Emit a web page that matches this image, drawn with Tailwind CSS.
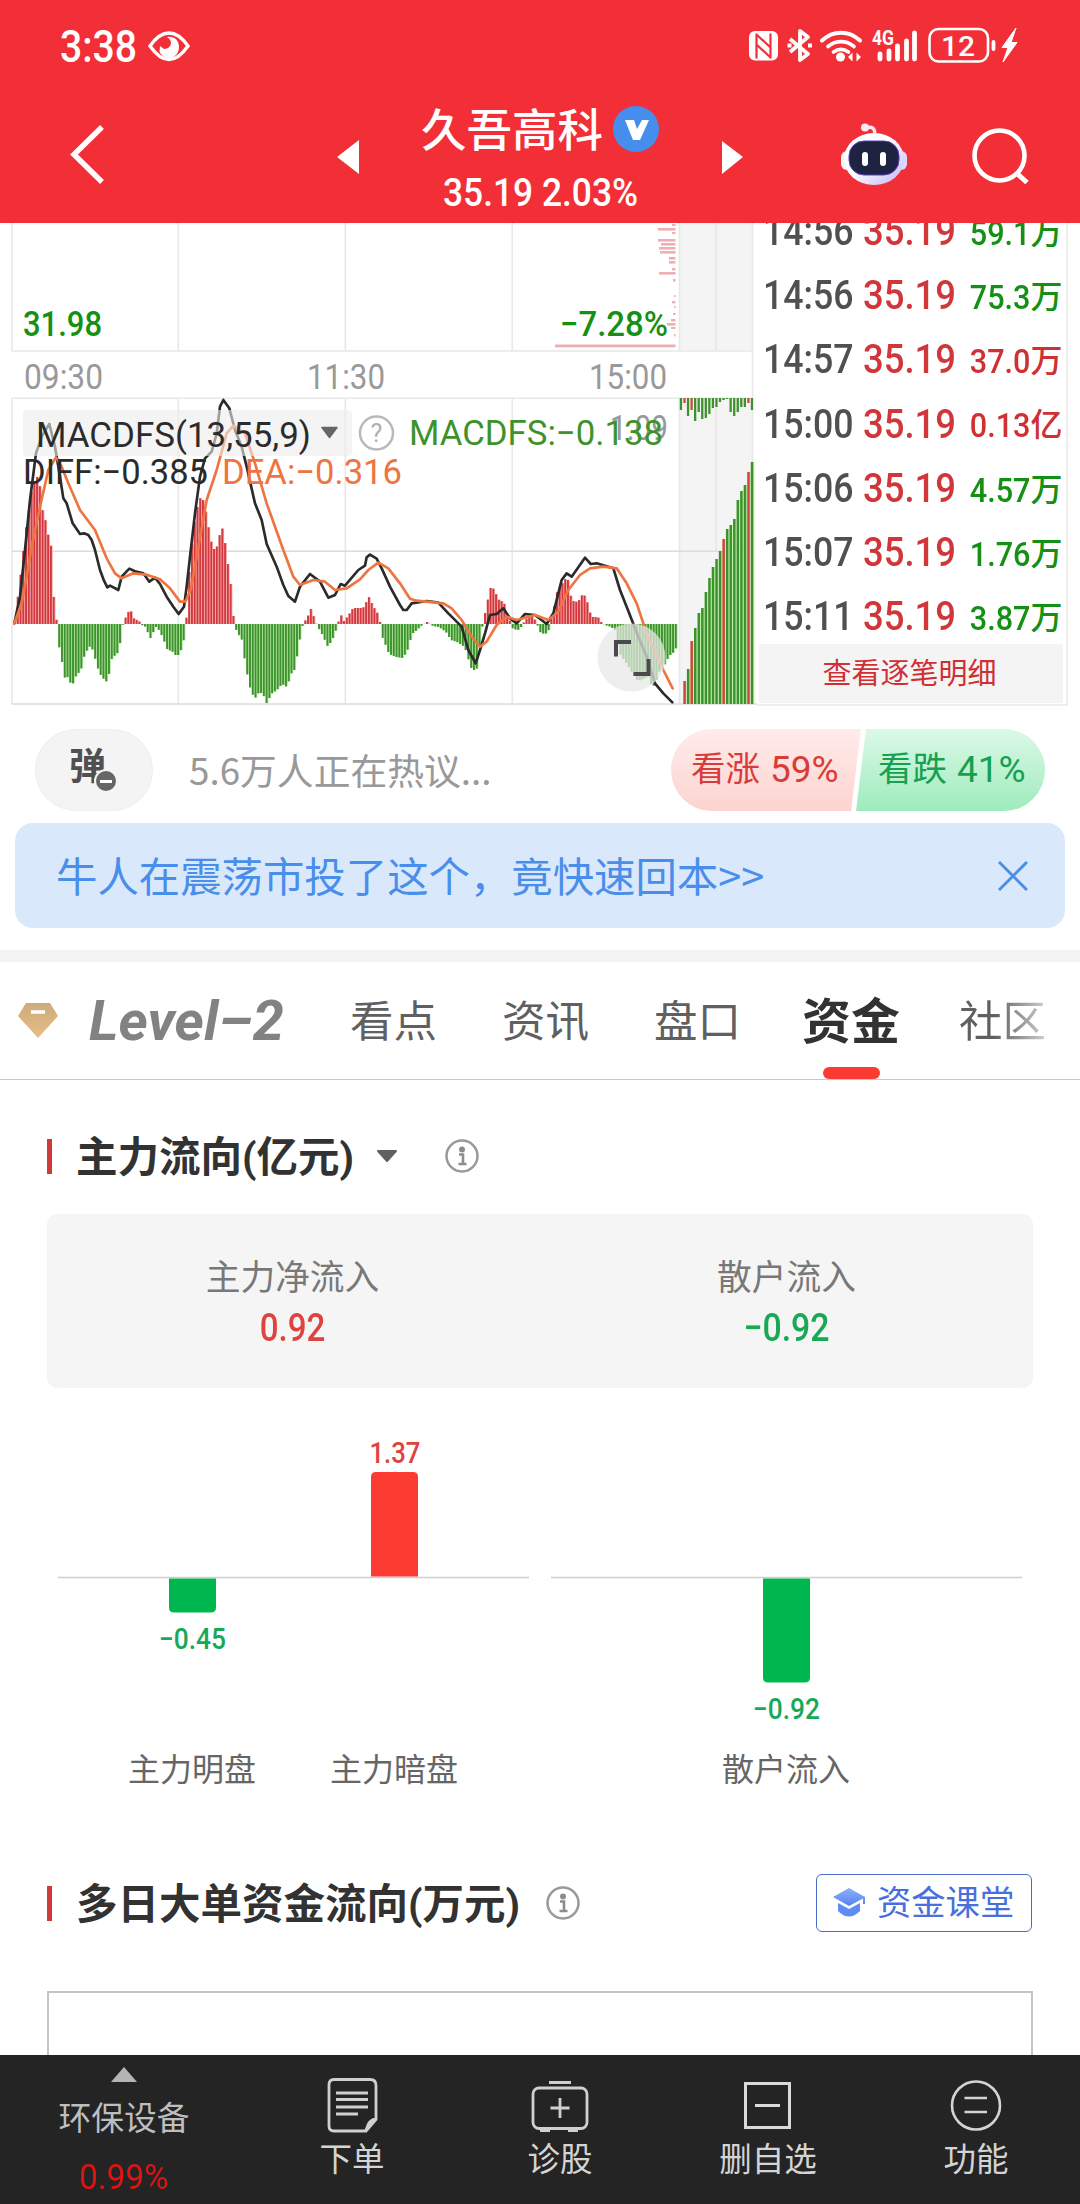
<!DOCTYPE html>
<html lang="zh-CN">
<head>
    <meta charset="UTF-8">
    <meta name="viewport" content="width=device-width, initial-scale=1.0">
    <title>久吾高科 - 资金</title>
    <script src="https://cdn.jsdelivr.net/npm/@tailwindcss/browser@4"></script>
</head>
<body class="bg-white">
<div class="w-[1080px] h-[2204px] flex flex-col overflow-hidden bg-white text-[#323232] font-['Roboto','Noto_Sans_CJK_SC',sans-serif]">

    <!-- Header -->
    <header class="h-[223px] shrink-0 bg-[#f22f37] text-white">
        <svg class="block" width="1080" height="223" viewBox="0 0 1080 223" fill="none">
            <!-- status bar -->
            <text x="60" y="62" font-size="43.500" font-weight="500" fill="#fff" textLength="77" lengthAdjust="spacingAndGlyphs">3:38</text>
            <path d="M150 46C157 36 163 33 169 33S181 36 188 46C181 56 175 59.500 169 59.500S157 56 150 46Z" stroke="#fff" stroke-width="3.400"/>
            <path d="M167 37c7-1 12 3 12 10 0 6-4 11-10 11-5 0-8-3-9.500-6.500L160 46l4 3c4 0 7-3 7-6 0-2-1-4-4-6Z" fill="#fff"/>

            <rect x="749" y="31" width="29" height="29.500" rx="6" fill="#fff"/>
            <path d="M756.500 33.500v25M770.500 33.500v25M757 35l13 12M757 45l13 12" stroke="#f22f37" stroke-width="2.200"/>

            <path d="M790 39l18 15-8 6V31l8 6-18 15" stroke="#fff" stroke-width="3.800" stroke-linejoin="round"/>
            <path d="M787.500 45.500h4M808 45.500h4" stroke="#fff" stroke-width="4"/>

            <path d="M822 40.500c11-10.500 27-10.500 38 0" stroke="#fff" stroke-width="4" stroke-linecap="round"/>
            <path d="M828 46.500c8-6.500 18-6.500 26 0M833.500 52c5-3.500 10-3.500 15 0" stroke="#fff" stroke-width="3.600" stroke-linecap="round"/>
            <circle cx="840.500" cy="57" r="4.500" fill="#fff"/>
            <path d="M848 57l4.500-4.500v9zM861 57l-4.500-4.500v9z" fill="#fff"/>

            <text x="872" y="45" font-size="21" font-weight="700" fill="#fff" textLength="22" lengthAdjust="spacingAndGlyphs">4G</text>
            <path d="M880 54v5M889 51v8M897.500 46v13M906.500 41v18M914.500 33v26" stroke="#fff" stroke-width="4.800" stroke-linecap="round"/>

            <rect x="929.500" y="29" width="58.500" height="32.500" rx="9" stroke="#fff" stroke-width="2.600"/>
            <text x="941" y="55.500" font-size="28" font-weight="500" fill="#fff" textLength="34" lengthAdjust="spacingAndGlyphs">12</text>
            <path d="M993.500 42v7" stroke="#fff" stroke-width="3.800" stroke-linecap="round"/>
            <path d="M1016 28l-14 19.500h6L1003 62l14-19.500h-6z" fill="#fff" stroke="#fff" stroke-width="1"/>

            <!-- navigation -->
            <path d="M102 127L74 154.500 102 182" stroke="#fff" stroke-width="5.400"/>
            <path d="M337 157L359 140V174zM743 157L722 141V174z" fill="#fff"/>
            <text x="421" y="147" font-size="45.500" font-weight="500" fill="#fff" textLength="182">久吾高科</text>
            <circle cx="636" cy="129" r="23" fill="#468eee"/>
            <path d="M625 120h9l3 9 5-9h7l-9 20h-7z" fill="#fff"/>
            <text x="443" y="205.500" font-size="39.500" font-weight="500" fill="#fff" textLength="195" lengthAdjust="spacingAndGlyphs">35.19 2.03%</text>

            <!-- assistant robot -->
            <defs>
                <linearGradient id="head" x1="0" y1="0" x2="1" y2="1">
                    <stop offset="0.450" stop-color="#ffffff"/>
                    <stop offset="1" stop-color="#bcb4f6"/>
                </linearGradient>
            </defs>
            <path d="M866 128c6-2 9 0 9 7" stroke="#fde8ee" stroke-width="3.500"/>
            <circle cx="865" cy="127.500" r="4" fill="#fde8ee"/>
            <rect x="841" y="151" width="12" height="19" rx="6" fill="#f4f0ff"/>
            <rect x="895" y="151" width="12" height="19" rx="6" fill="#dcd8ff"/>
            <ellipse cx="874" cy="159" rx="30" ry="26" fill="url(#head)"/>
            <rect x="849" y="141" width="50" height="34" rx="15" fill="#1d2340" stroke="#5a3fc0" stroke-width="1"/>
            <rect x="862" y="152" width="6" height="14" rx="3" fill="#fff"/>
            <rect x="880" y="152" width="6" height="14" rx="3" fill="#fff"/>

            <circle cx="999.500" cy="155.500" r="25" stroke="#fff" stroke-width="4.600"/>
            <path d="M1016.500 173L1027 182.500" stroke="#fff" stroke-width="5"/>
        </svg>
    </header>

    <!-- Intraday chart and trade list -->
    <section class="h-[483px] shrink-0 flex">
        <svg class="block shrink-0" width="757" height="483" viewBox="0 223 757 483" fill="none">
            <path d="M679 223h74v128h-74zM679 398h74v306h-74z" fill="#f4f4f4"/>
            <path d="M12 223v128.500M178.300 223v128.500M345.300 223v128.500M512.300 223v128.500M679.500 223v128.500M716 223v128.500M752.500 223v481M12 351h741M12 398v306M178.300 398v306M345.300 398v306M512.300 398v306M679.500 398v306M716 398v153M12 398.300h741" stroke="#e8e8e8" stroke-width="1.600"/>
            <path d="M12 551.300h741M12 704h745" stroke="#dcdcdc" stroke-width="1.400"/>

            <g id="profile" fill="#f0aeb2"></g>
            <g id="histogram"></g>
            <g id="auction"></g>

            <g transform="translate(0 220) scale(.33333)" stroke-width="8" stroke-linejoin="round" stroke-linecap="round">
                <polyline stroke="#2b2b2b" points="43,1210 60,1130 75,990 90,840 108,700 125,650 148,612 165,680 180,770 190,835 200,850 218,910 240,942 252,940 265,945 275,960 285,990 300,1050 312,1082 322,1102 330,1097 355,1110 365,1070 388,1046 405,1054 430,1060 448,1085 465,1073 480,1092 500,1130 520,1160 536,1182 552,1160 560,1100 570,1010 585,880 600,770 615,715 635,695 650,640 660,560 670,540 688,565 705,630 725,680 740,740 765,850 785,900 800,972 830,1040 850,1095 865,1128 885,1145 900,1100 930,1062 960,1085 985,1133 1005,1125 1022,1092 1035,1097 1075,1050 1095,1037 1100,1012 1110,1004 1130,1016 1145,1045 1170,1100 1200,1155 1210,1170 1220,1170 1235,1150 1280,1143 1315,1148 1345,1180 1385,1220 1405,1290 1427,1330 1440,1290 1455,1240 1470,1185 1490,1182 1510,1165 1530,1195 1550,1210 1575,1182 1605,1185 1640,1212 1660,1180 1685,1080 1700,1060 1715,1070 1755,1013 1772,1032 1790,1030 1840,1045 1860,1110 1880,1160 1915,1250 1940,1310 1965,1390 1990,1420 2017,1447"/>
                <polyline stroke="#ee7440" points="43,1210 65,1150 80,1070 95,980 120,860 145,750 168,712 185,740 205,790 240,870 285,930 320,1015 345,1060 365,1075 400,1060 440,1064 480,1078 510,1105 540,1145 556,1145 572,1110 590,1010 620,840 650,750 680,640 700,617 735,640 765,730 800,850 850,990 880,1070 900,1095 940,1080 975,1085 1005,1110 1040,1105 1080,1078 1105,1050 1135,1028 1165,1045 1200,1090 1230,1136 1250,1142 1330,1150 1355,1165 1385,1200 1415,1250 1440,1280 1460,1265 1490,1215 1520,1190 1550,1200 1605,1185 1645,1200 1675,1175 1705,1110 1740,1065 1770,1045 1810,1040 1850,1045 1880,1090 1910,1150 1940,1240 1990,1350 2018,1405"/>
            </g>

            <!-- indicator picker -->
            <rect x="23" y="410" width="329" height="46" rx="4" fill="#ededed" fill-opacity=".6"/>
            <path d="M322 427.500h15l-7.500 10z" fill="#666" stroke="#666" stroke-width="1.500" stroke-linejoin="round"/>
            <circle cx="376.500" cy="433" r="16.500" fill="#fff" stroke="#b9b9b9" stroke-width="2.500"/>
            <text x="376.500" y="442" font-size="25" fill="#b0b0b0" text-anchor="middle">?</text>

            <g font-size="35" font-weight="500">
                <text x="23" y="335.500" fill="#149014" textLength="79" lengthAdjust="spacingAndGlyphs">31.98</text>
                <text x="560" y="335.500" fill="#149014" textLength="108" lengthAdjust="spacingAndGlyphs">−7.28%</text>
                <g fill="#999" font-weight="400">
                    <text x="24" y="388.500" textLength="79" lengthAdjust="spacingAndGlyphs">09:30</text>
                    <text x="307" y="388.500" textLength="78" lengthAdjust="spacingAndGlyphs">11:30</text>
                    <text x="589" y="388.500" textLength="78" lengthAdjust="spacingAndGlyphs">15:00</text>
                    <text x="610" y="440" textLength="58" lengthAdjust="spacingAndGlyphs">1.09</text>
                </g>
                <g font-weight="400">
                    <text x="36" y="446.500" fill="#2b2b2b" textLength="275" lengthAdjust="spacingAndGlyphs">MACDFS(13,55,9)</text>
                    <text x="409" y="445" fill="#3d932b" textLength="254" lengthAdjust="spacingAndGlyphs">MACDFS:−0.138</text>
                    <text x="23" y="484" fill="#2b2b2b" textLength="185" lengthAdjust="spacingAndGlyphs">DIFF:−0.385</text>
                    <text x="222" y="484" fill="#ee7440" textLength="180" lengthAdjust="spacingAndGlyphs">DEA:−0.316</text>
                </g>
            </g>

            <!-- expand button -->
            <circle cx="631.500" cy="657.500" r="34" fill="#e8e8e8" fill-opacity=".72"/>
            <path d="M616 656.500V642h15M648.500 659v15H633.500" stroke="#4a4a4a" stroke-width="4"/>
        </svg>

        <div class="w-[311px] h-[483px] border-r-2 border-b-2 border-[#eee] flex flex-col justify-end overflow-hidden pb-px">
            <div id="trades" class="shrink-0 font-medium text-[41px]"></div>
            <button class="h-[59px] shrink-0 -mt-[3px] ml-[2px] mr-[3px] pt-[3px] pr-[3px] bg-[#f4f4f4] text-[#cf3034] text-[29px]">查看逐笔明细</button>
        </div>
    </section>

    <!-- Discussion and vote -->
    <section class="h-[82px] shrink-0 mt-[23px] pl-[35px] pr-[35px] flex items-center">
        <div class="relative w-[118px] h-[82px] rounded-full bg-[#f4f4f4] border border-[#eee]">
            <span class="absolute left-[33px] top-[11px] text-[37px] leading-[54px] font-bold text-[#505050]">弹</span>
            <svg class="absolute left-[58px] top-[39px]" width="24" height="24" viewBox="0 0 24 24">
                <circle cx="12" cy="12" r="11" fill="#666" stroke="#f4f4f4" stroke-width="2"/>
                <path d="M6 12.500h12" stroke="#fff" stroke-width="3"/>
            </svg>
        </div>
        <div class="ml-[36px] text-[36.800px] text-[#999] whitespace-nowrap font-['Noto_Sans_CJK_SC',sans-serif]">5.6万人正在热议...</div>
        <div class="ml-auto flex text-[34.500px] whitespace-nowrap">
            <div class="w-[190px] h-[82px] pl-[20px] rounded-l-full bg-linear-to-b from-[#feeceb] to-[#fdd3d0] text-[#d93b38] flex items-center [clip-path:polygon(0_0,100%_0,calc(100%-10px)_100%,0_100%)]"><span>看涨</span><span class="inline-block origin-left text-[37px] ml-[10px]">59%</span></div>
            <div class="w-[189px] h-[82px] -ml-[5px] pl-[22px] rounded-r-full bg-linear-to-b from-[#dbf9e7] to-[#9debbd] text-[#16a050] flex items-center [clip-path:polygon(10px_0,100%_0,100%_100%,0_100%)]"><span>看跌</span><span class="inline-block origin-left text-[37px] ml-[10px]">41%</span></div>
        </div>
    </section>

    <!-- Promo banner -->
    <section class="h-[105px] shrink-0 mt-[12px] mx-[15px] pl-[41px] pr-[37px] rounded-[18px] bg-[#dae8fb] text-[#488eea] flex items-center justify-between">
        <span class="-mt-[3px] text-[41.400px] whitespace-nowrap font-['Noto_Sans_CJK_SC',sans-serif]">牛人在震荡市投了这个，竟快速回本&gt;&gt;</span>
        <svg width="30" height="30" viewBox="0 0 30 30"><path d="M1 1l28 28M29 1L1 29" stroke="#488eea" stroke-width="3"/></svg>
    </section>

    <div class="h-[12px] shrink-0 mt-[22px] bg-[#f4f4f4]"></div>

    <!-- Tabs -->
    <nav class="h-[118px] shrink-0 border-b border-[#c8c8c8] flex items-center text-[43.500px] text-[#606060] whitespace-nowrap">
        <svg class="ml-[17px] shrink-0" width="42" height="38" viewBox="0 0 42 38">
            <defs><linearGradient id="gem" x1="0" y1="0" x2="0" y2="1"><stop offset="0" stop-color="#ccab7c"/><stop offset="1" stop-color="#e6be85"/></linearGradient></defs>
            <path d="M9 1h24l8 13-20 22L1 14z" fill="url(#gem)"/>
            <path d="M14 10h14" stroke="#fff" stroke-width="3.500"/>
        </svg>
        <svg class="ml-[27px] shrink-0" width="202" height="60" viewBox="0 0 202 60">
            <text x="3" y="49" font-family="Roboto" font-style="italic" font-weight="700" font-size="56" fill="#828282" textLength="195" lengthAdjust="spacingAndGlyphs">Level–2</text>
        </svg>
        <span class="ml-[62px] pt-[4px]">看点</span>
        <span class="ml-[65px] pt-[4px]">资讯</span>
        <span class="ml-[65px] pt-[4px]">盘口</span>
        <span class="relative ml-[61px] h-[118px] leading-[122px] text-[49px] font-bold text-[#323232]">资金<i class="absolute left-[21px] bottom-px w-[57px] h-[12px] rounded-full bg-[#fb3a32]"></i></span>
        <span class="ml-[59px] pt-[4px] bg-linear-to-r from-[#606060] from-40% to-[#d0d0d0] bg-clip-text text-transparent">社区</span>
    </nav>

    <!-- Main fund flow -->
    <section class="shrink-0 px-[47px]">
        <div class="h-[60px] mt-[46px] flex items-center text-[41.500px] font-bold whitespace-nowrap">
            <i class="w-[5px] h-[35px] bg-[#cf3a3d]"></i>
            <span class="ml-[24px] pt-[4px]">主力流向(亿元)</span>
            <svg class="ml-[22px]" width="22" height="14" viewBox="0 0 22 14"><path d="M2 2h18l-9 10z" fill="#606060" stroke="#606060" stroke-width="2" stroke-linejoin="round"/></svg>
            <svg class="ml-[47px]" width="34" height="34" viewBox="0 0 34 34" fill="none">
                <circle cx="17" cy="17" r="15.500" stroke="#999" stroke-width="2.500"/>
                <circle cx="17" cy="10.500" r="3" fill="#8c8c8c"/>
                <path d="M14 15.500h4v9M13.500 25h8" stroke="#8c8c8c" stroke-width="2.600"/>
            </svg>
        </div>
        <div class="h-[174px] mt-[28px] rounded-[10px] bg-[#f5f5f5] grid grid-cols-2 text-center">
            <div class="pt-[42px] pr-[2px]">
                <div class="text-[34.700px] leading-[44px] text-[#787878]">主力净流入</div>
                <div class="mt-[3px] text-[38.500px] leading-[50px] font-medium text-[#df4340] scale-x-[.86]">0.92</div>
            </div>
            <div class="pt-[42px]">
                <div class="text-[34.700px] leading-[44px] text-[#787878]">散户流入</div>
                <div class="mt-[3px] text-[38.500px] leading-[50px] font-medium text-[#18a957] scale-x-[.88]">−0.92</div>
            </div>
        </div>
        <svg class="block" width="986" height="432" viewBox="47 1388 986 432" text-anchor="middle">
            <path d="M58 1577.500h471M551 1577.500h471" stroke="#cfcfcf" stroke-width="1.500"/>
            <path d="M371 1576.500v-99.500q0-5 5-5h37q5 0 5 5v99.500z" fill="#fb3a32"/>
            <path d="M169 1578.500v29q0 5 5 5h37q5 0 5-5v-29zM763 1578.500v99q0 5 5 5h37q5 0 5-5v-99z" fill="#00b64f"/>
            <g font-size="29" font-weight="500">
                <text x="395" y="1463" fill="#df4340" textLength="51" lengthAdjust="spacingAndGlyphs">1.37</text>
                <text x="192.500" y="1649" fill="#18a957" textLength="67" lengthAdjust="spacingAndGlyphs">−0.45</text>
                <text x="786.500" y="1719" fill="#18a957" textLength="67" lengthAdjust="spacingAndGlyphs">−0.92</text>
            </g>
            <g font-size="32" fill="#666">
                <text x="192" y="1780.500">主力明盘</text>
                <text x="394" y="1780.500">主力暗盘</text>
                <text x="786" y="1780.500">散户流入</text>
            </g>
        </svg>
    </section>

    <!-- Multi-day large orders -->
    <section class="flex-1 min-h-0 px-[47px] flex flex-col">
        <div class="h-[60px] mt-[53px] shrink-0 flex items-center text-[41.500px] font-bold whitespace-nowrap">
            <i class="w-[5px] h-[35px] bg-[#cf3a3d]"></i>
            <span class="ml-[24px] pt-[4px]">多日大单资金流向(万元)</span>
            <svg class="ml-[26px]" width="34" height="34" viewBox="0 0 34 34" fill="none">
                <circle cx="17" cy="17" r="15.500" stroke="#999" stroke-width="2.500"/>
                <circle cx="17" cy="10.500" r="3" fill="#8c8c8c"/>
                <path d="M14 15.500h4v9M13.500 25h8" stroke="#8c8c8c" stroke-width="2.600"/>
            </svg>
            <button class="ml-auto mr-px w-[216px] h-[58px] border-[1.500px] border-[#4a6cc8] rounded-[6px] pl-[15px] flex items-center font-normal text-[34.300px] text-[#4a6fdc]">
                <svg class="mr-[11px]" width="34" height="32" viewBox="0 0 34 32">
                    <defs><linearGradient id="cap" x1="0" y1="0" x2="0" y2="1"><stop offset="0" stop-color="#8db0fb"/><stop offset="1" stop-color="#5682ee"/></linearGradient></defs>
                    <path d="M17 1l16 9v7h-2v-5.500L17 19 1 10z" fill="url(#cap)"/>
                    <path d="M6 16l11 6 11-6v8q-11 11-22 0z" fill="#5f8bf2"/>
                </svg>
                <span class="pt-[2px]">资金课堂</span>
            </button>
        </div>
        <div class="mt-[58px] flex-1 border-2 border-b-0 border-[#c4c4c4]"></div>
    </section>

    <!-- Bottom bar -->
    <footer class="h-[149px] shrink-0 bg-[#242424] text-[#d4d4d4] text-[32.500px] leading-[40px] text-center grid grid-cols-[248px_repeat(4,208px)]">
        <div class="pt-[12px] flex flex-col items-center text-[#bebebe]">
            <svg width="28" height="16" viewBox="0 0 28 16"><path d="M14 0l13 15H1z" fill="#b4b4b4"/></svg>
            <div class="mt-[16px] text-[32.800px]">环保设备</div>
            <div class="mt-[19px] text-[35px] text-[#dc1414] scale-x-95">0.99%</div>
        </div>
        <div class="pt-[22px] flex flex-col items-center">
            <svg width="60" height="56" viewBox="322 2077 60 56" fill="none" stroke="#cfcfcf" stroke-width="2.800">
                <path d="M334 2079.500h36q6 0 6 6v34l-10 11.500h-32q-5 0-5-5v-41q0-5.500 5-5.500zM376 2119q-6 1-8 6l-2 5"/>
                <path d="M336 2093h32M336 2099.500h32M336 2107h32M336 2114h22"/>
            </svg>
            <div class="mt-[7px]">下单</div>
        </div>
        <div class="pt-[22px] flex flex-col items-center">
            <svg width="60" height="56" viewBox="530 2077 60 56" fill="none" stroke="#cfcfcf" stroke-width="2.800">
                <rect x="533" y="2088" width="54" height="40.500" rx="6"/>
                <path d="M549 2082.500h22M550.500 2108h19M560 2098v20M540 2130.500h10M568 2130.500h10"/>
            </svg>
            <div class="mt-[7px]">诊股</div>
        </div>
        <div class="pt-[22px] flex flex-col items-center">
            <svg width="60" height="56" viewBox="738 2077 60 56" fill="none" stroke="#dadada" stroke-width="3">
                <path d="M745.500 2083.500h44v44h-44zM755 2105.500h25"/>
            </svg>
            <div class="mt-[7px]">删自选</div>
        </div>
        <div class="pt-[22px] flex flex-col items-center">
            <svg width="60" height="56" viewBox="946 2077 60 56" fill="none" stroke="#d4d4d4" stroke-width="2.600">
                <circle cx="976" cy="2105.500" r="24"/>
                <path d="M964.500 2098h22.500M964.500 2112h22.500"/>
            </svg>
            <div class="mt-[7px]">功能</div>
        </div>
    </footer>
</div>

<script>
    // Trade ticks: time, price, volume, unit, direction
    const trades = [
        ['14:56', '35.19', '59.1', '万', 'sell'],
        ['14:56', '35.19', '75.3', '万', 'sell'],
        ['14:57', '35.19', '37.0', '万', 'buy'],
        ['15:00', '35.19', '0.13', '亿', 'buy'],
        ['15:06', '35.19', '4.57', '万', 'sell'],
        ['15:07', '35.19', '1.76', '万', 'sell'],
        ['15:11', '35.19', '3.87', '万', 'sell']
    ];
    document.getElementById('trades').innerHTML = trades.map(([time, price, vol, unit, side]) => `
        <div class="h-[64.200px] pt-[4px] pl-[6px] pr-[8px] flex items-center whitespace-nowrap">
            <span class="w-[100px] origin-left scale-x-[.87] text-[#505050]">${time}</span>
            <span class="w-[100px] origin-left scale-x-[.89] text-[#d0363a]">${price}</span>
            <span class="ml-auto flex items-center text-[34px] ${side === 'buy' ? 'text-[#cf3034]' : 'text-[#149014]'}">
                <span class="origin-right scale-x-90 pt-[3px]">${vol}</span><span class="text-[32px] pt-[2px]">${unit}</span>
            </span>
        </div>`).join('');

    const rect = (x, y, w, h, fill) => `<rect x="${x.toFixed(2)}" y="${y.toFixed(2)}" width="${w}" height="${h.toFixed(2)}"${fill ? ` fill="${fill}"` : ''}/>`;

    // MACD histogram: [x, height] knots, one bar per minute between them
    const zero = 624;
    const knots = [
        [14,3],[18,38],[21,60],[24,90],[28,115],[31,135],[35,147],[38,147],[41,116],[44,106],[47,90],[50,78],[52,33],[55,8],[56,0],
        [58,-22],[61,-38],[63,-54],[66,-52],[71,-62],[75,-52],[80,-46],[83,-33],[88,-22],[92,-26],[96,-42],[99,-50],[105,-58],[108,-50],[110,-36],[115,-30],[118,-28],[121,-3],
        [124,5],[127,12],[130,13],[132,6],[138,3],[141,-1],[145,-3],[149,-15],[152,-9],[154,-2],[158,-6],[162,-14],[166,-25],[172,-28],[176,-33],[180,-26],[183,-15],[185,-3],
        [187,40],[191,80],[195,112],[198,122],[200,128],[203,122],[206,106],[209,88],[212,75],[215,75],[218,84],[220,100],[223,90],[226,66],[229,46],[231,28],[233,0],
        [236,-8],[241,-16],[244,-38],[248,-60],[251,-70],[255,-74],[258,-68],[262,-70],[266,-80],[270,-70],[276,-66],[281,-60],[286,-63],[290,-50],[294,-45],[298,-20],[301,-3],
        [304,3],[307,8],[309,17],[312,10],[314,3],[317,-3],[322,-12],[327,-23],[332,-14],[335,-6],[338,4],[341,10],[343,3],[347,8],[352,16],[362,16],[368,27],[372,18],[376,12],[379,2],
        [381,-12],[385,-22],[388,-30],[395,-33],[402,-34],[407,-25],[411,-10],[416,-6],[420,-2],[426,2],[432,-2],[438,-3],[445,-8],[450,-16],[456,-18],[462,-22],[466,-28],[469,-43],[473,-46],[477,-44],[479,-15],[481,-4],
        [483,6],[486,20],[489,36],[492,36],[495,30],[498,24],[503,22],[506,8],[509,3],[512,-5],[517,-6],[521,-2],[524,4],[529,8],[533,6],[536,0],[539,-8],[543,-10],[547,-9],[549,0],
        [552,12],[556,32],[561,40],[564,45],[567,44],[569,30],[572,23],[577,22],[581,29],[585,28],[588,14],[591,7],[597,7],[600,2],[604,-1],[610,-3],[614,-6],[619,-30],[626,-40],[632,-50],[637,-57],[642,-55],[648,-52],[651,-64],[654,-60],[658,-48],[664,-40],[668,-32],[673,-28],[676,-22]
    ];
    let bars = '', k = 0;
    for (let i = 0; i < 240; i++) {
        const x = 14 + i * 2.765;
        while (k < knots.length - 2 && knots[k + 1][0] < x) k++;
        const [x0, h0] = knots[k], [x1, h1] = knots[k + 1];
        const h = h0 + (h1 - h0) * (x - x0) / (x1 - x0);
        const top = h > 0 ? zero - h : zero;
        bars += rect(x, top, 2.765, Math.abs(h), h > 0 ? '#f8b0b0' : '#b4e6a4');
        bars += rect(x, top, 1.9, Math.abs(h), h > 0 ? '#d2383e' : '#3d932b');
    }
    document.getElementById('histogram').innerHTML = bars;

    // Call auction: matched volume from the bottom, unmatched from the top
    const matched = [0, 23, 35, 63, 76, 91, 96, 112, 126, 137, 145, 153, 165, 175, 179, 185, 204, 213, 219, 232, 242];
    const unmatched = [12, 5, 18, 12, 23, 14, 21, 20, 16, 10, 9, 4, 2, 1, 14, 18, 14, 9, 9, 5, 12];
    const matchedUp = [1, 3, 12, 19], unmatchedUp = [1, 3, 19];
    document.getElementById('auction').innerHTML = matched.map((h, i) => {
        const x = 679.8 + i * 3.55;
        return rect(x, 704 - h, 3.5, h, '#c8f2b8')
            + rect(x, 704 - h, 2.5, h, matchedUp.includes(i) ? '#d2453e' : '#3d932b')
            + rect(x, 398, 2.3, unmatched[i], unmatchedUp.includes(i) ? '#d2453e' : '#3d932b');
    }).join('');

    // Price distribution: [left, y, thickness], all ending at x = 675.5
    const profile = [
        [672,224,2],[658,228,2.6],[672,232,2],[658,239,2.6],[661,243,2.6],[659,247,2.6],[660,251,2.6],[669,257,2.6],[669,261,2.6],
        [672,268,2.4],[659,272,2.6],[673,279,2.6],[674,295,2],[672,301,2.4],[674,306,2],[673,313,2],[671,319,2.4],[667,323,2.6],[671,327,2],[674,334,2.4],[555,344.5,2.8]
    ];
    document.getElementById('profile').innerHTML = profile.map(([x, y, t]) => rect(x, y, 675.5 - x, t)).join('');
</script>
</body>
</html>
